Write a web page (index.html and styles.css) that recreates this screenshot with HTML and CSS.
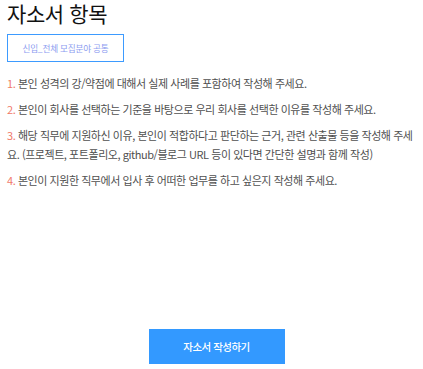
FILE: index.html
```html
<!DOCTYPE html>
<html lang="ko">
<head>
<meta charset="utf-8">
<link rel="stylesheet" href="styles.css">
</head>
<body>
<div class="page">
  <h1 class="title">자소서 항목</h1>
  <div class="tag">신입_전체 모집분야 공통</div>
  <ol class="items">
    <li><span class="num">1.</span> 본인 성격의 강/약점에 대해서 실제 사례를 포함하여 작성해 주세요.</li>
    <li><span class="num">2.</span> 본인이 회사를 선택하는 기준을 바탕으로 우리 회사를 선택한 이유를 작성해 주세요.</li>
    <li><span class="num">3.</span> 해당 직무에 지원하신 이유, 본인이 적합하다고 판단하는 근거, 관련 산출물 등을 작성해 주세요. (프로젝트, 포트폴리오, github/블로그 URL 등이 있다면 간단한 설명과 함께 작성)</li>
    <li><span class="num">4.</span> 본인이 지원한 직무에서 입사 후 어떠한 업무를 하고 싶은지 작성해 주세요.</li>
  </ol>
  <div class="actions">
    <button class="write">자소서 작성하기</button>
  </div>
</div>
</body>
</html>
```

FILE: styles.css
```css
html, body {
  margin: 0;
  padding: 0;
  background: #fff;
}
body {
  font-family: "Noto Sans CJK KR", "Noto Sans", sans-serif;
  color: #555;
}
.page {
  padding: 0 8px 0 7px;
  display: flex;
  flex-direction: column;
}
.title {
  margin: 0;
  font-size: 21px;
  font-weight: 400;
  letter-spacing: -0.4px;
  line-height: 26px;
  color: #111;
}
.tag {
  margin-top: 8px;
  width: 117px;
  height: 28px;
  box-sizing: border-box;
  border: 1px solid #3d9bff;
  display: flex;
  align-items: center;
  justify-content: center;
  font-size: 8.6px;
  letter-spacing: -0.2px;
  color: #8c9cf0;
}
.items {
  list-style: none;
  margin: 12px 0 0;
  padding: 0;
}
.items li {
  font-size: 11px;
  letter-spacing: -0.45px;
  line-height: 19px;
  margin-bottom: 7px;
  color: #505050;
}
.num {
  color: #f07a6a;
}
.actions {
  display: flex;
  justify-content: center;
  padding-left: 11px;
  margin-top: 132px;
}
.write {
  width: 136px;
  height: 35px;
  border: 0;
  background: #3399ff;
  color: #fff;
  font-family: inherit;
  font-size: 10.5px;
  font-weight: 500;
  letter-spacing: -0.5px;
}
```
